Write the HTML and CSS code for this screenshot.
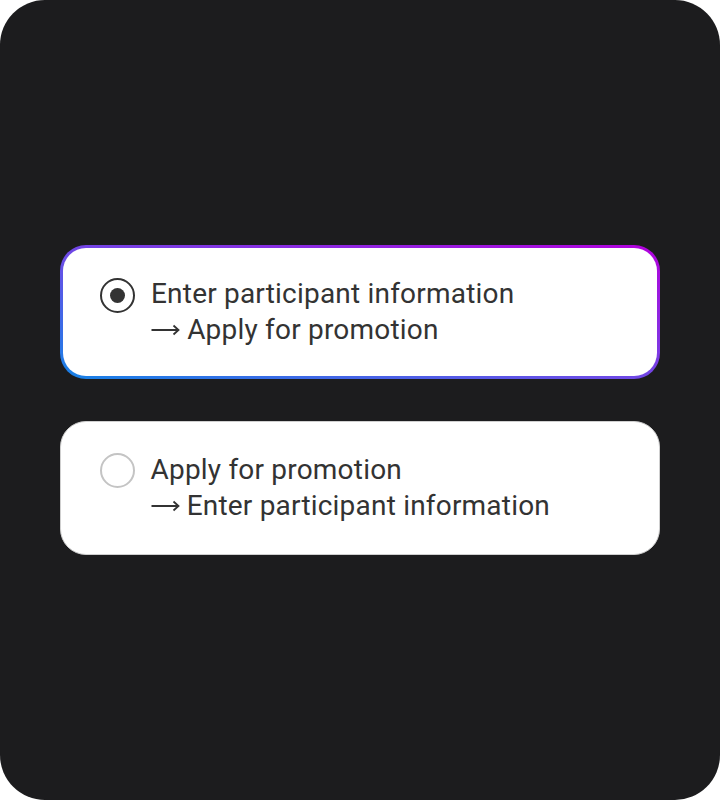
FILE: index.html
```html
<!DOCTYPE html>
<html lang="en">
<head>
<meta charset="utf-8">
<link rel="stylesheet" href="styles.css">
</head>
<body>
<div class="frame">
  <div class="options">
    <label class="option selected">
      <span class="radio"><span class="dot"></span></span>
      <span class="text">Enter participant information<br><svg class="arrow" viewBox="0 0 29 12" width="29" height="12"><path d="M0.5 6H27.5M22.5 1.5L27.5 6L22.5 10.5" fill="none" stroke="#333333" stroke-width="1.8" stroke-linecap="butt" stroke-linejoin="miter"/></svg> Apply for promotion</span>
    </label>
    <label class="option">
      <span class="radio"></span>
      <span class="text">Apply for promotion<br><svg class="arrow" viewBox="0 0 29 12" width="29" height="12"><path d="M0.5 6H27.5M22.5 1.5L27.5 6L22.5 10.5" fill="none" stroke="#333333" stroke-width="1.8" stroke-linecap="butt" stroke-linejoin="miter"/></svg> Enter participant information</span>
    </label>
  </div>
</div>
</body>
</html>
```
FILE: styles.css
```css
html, body {
  margin: 0;
  padding: 0;
  background: #ffffff;
}
.frame {
  width: 720px;
  height: 800px;
  background: #1c1c1e;
  border-radius: 45px;
  display: flex;
  align-items: center;
  justify-content: center;
  font-family: Roboto, "Liberation Sans", sans-serif;
}
.options {
  width: 600px;
  display: flex;
  flex-direction: column;
  gap: 42px;
}
.option {
  box-sizing: border-box;
  height: 134px;
  border-radius: 26px;
  background: #ffffff;
  border: 1.5px solid #cfcfcf;
  display: flex;
  align-items: center;
  padding: 0 20px 0 38.5px;
  gap: 16px;
}
.option.selected {
  border: 3px solid transparent;
  background:
    linear-gradient(#ffffff, #ffffff) padding-box,
    linear-gradient(to top right, #1682e6 0%, #6a4de6 45%, #b300dd 100%) border-box;
  padding-left: 37px;
}
.radio {
  box-sizing: border-box;
  width: 35px;
  height: 35px;
  border-radius: 50%;
  border: 2px solid #c4c4c4;
  display: flex;
  align-items: center;
  justify-content: center;
  align-self: flex-start;
  margin-top: 31px;
  flex: none;
}
.option.selected .radio {
  border-color: #333333;
  margin-top: 30px;
}
.dot {
  width: 15px;
  height: 15px;
  border-radius: 50%;
  background: #333333;
}
.text {
  font-size: 28px;
  line-height: 36px;
  color: #333333;
  letter-spacing: 0.2px;
}
.arrow {
  vertical-align: 3px;
}
```
